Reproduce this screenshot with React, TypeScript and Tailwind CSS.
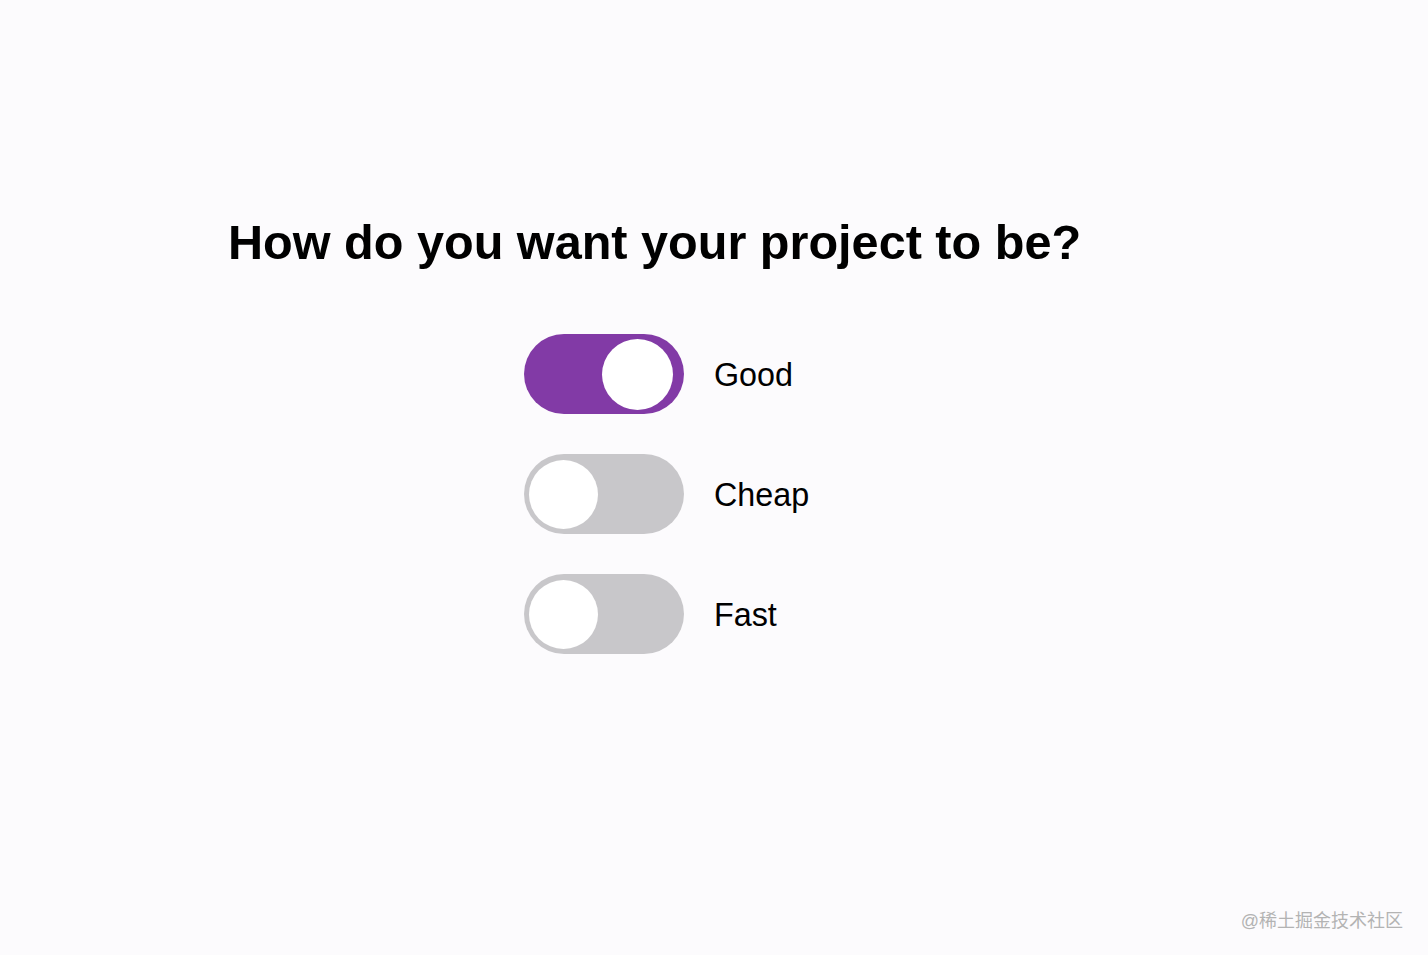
import React from "react";

function Toggle({ on }: { on: boolean }) {
  return on ? (
    <div className="w-[160px] h-[80px] rounded-full bg-[#823aa6] flex items-center justify-end pr-[11px]">
      <div className="w-[71px] h-[71px] rounded-full bg-white" />
    </div>
  ) : (
    <div className="w-[160px] h-[80px] rounded-full bg-[#c8c7ca] flex items-center justify-start pl-[5px]">
      <div className="w-[69px] h-[69px] rounded-full bg-white" />
    </div>
  );
}

export default function App() {
  const items = [
    { label: "Good", on: true },
    { label: "Cheap", on: false },
    { label: "Fast", on: false },
  ];
  return (
    <div
      className="w-[1428px] h-[955px] bg-[#fcfbfd] relative"
      style={{ fontFamily: '"Liberation Sans", Arial, sans-serif' }}
    >
      <div className="pt-[212px] pl-[228px]">
        <h1 className="text-[48.6px] leading-[60px] font-bold text-black m-0">
          How do you want your project to be?
        </h1>
      </div>
      <div className="pl-[524px] pt-[62px] flex flex-col gap-[40px]">
        {items.map((it) => (
          <div key={it.label} className="flex items-center gap-[30px]">
            <Toggle on={it.on} />
            <span className="text-[32.3px] text-black pt-[2px]">{it.label}</span>
          </div>
        ))}
      </div>
      <div
        className="absolute right-[25px] bottom-[20px] text-[18px] text-[#b3b3b3]"
        style={{ fontFamily: '"Liberation Sans", "Noto Sans CJK SC", sans-serif' }}
      >
        @稀土掘金技术社区
      </div>
    </div>
  );
}
